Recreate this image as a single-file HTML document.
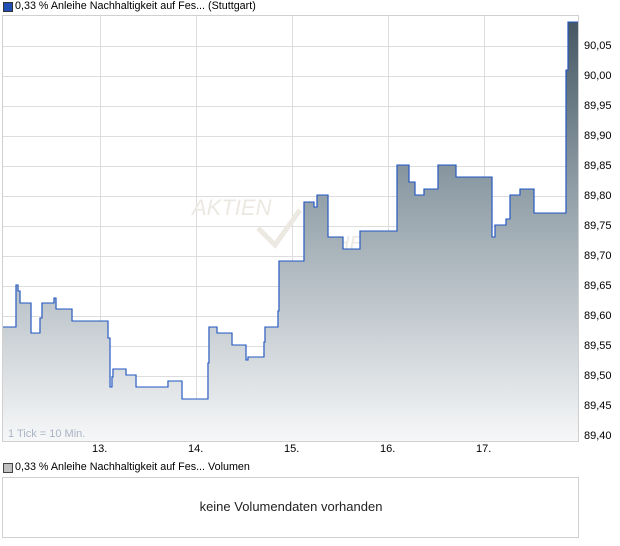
<!DOCTYPE html>
<html><head><meta charset="utf-8"><style>
body{margin:0;width:620px;height:546px;background:#fff;font-family:"Liberation Sans",sans-serif;position:relative;overflow:hidden}
.t{position:absolute;font-size:11px;color:#000;white-space:nowrap}
</style></head><body>
<div style="position:absolute;left:3px;top:2px;width:8px;height:8px;background:#1f4fb5;border:1px solid #333"></div>
<div class="t" style="left:15px;top:0px;font-size:10.75px">0,33 % Anleihe Nachhaltigkeit auf Fes... (Stuttgart)</div>
<svg style="position:absolute;left:0;top:0" width="620" height="546">
<defs><linearGradient id="g" x1="0" y1="22" x2="0" y2="441" gradientUnits="userSpaceOnUse">
<stop offset="0" stop-color="#465864"/><stop offset="0.4" stop-color="#909ea7"/><stop offset="1" stop-color="#f6f7f8"/></linearGradient></defs>
<g stroke="#dddddd" stroke-width="1">
<line x1="3" y1="46.5" x2="578" y2="46.5"/><line x1="3" y1="76.5" x2="578" y2="76.5"/><line x1="3" y1="106.5" x2="578" y2="106.5"/><line x1="3" y1="136.5" x2="578" y2="136.5"/><line x1="3" y1="166.5" x2="578" y2="166.5"/><line x1="3" y1="196.5" x2="578" y2="196.5"/><line x1="3" y1="226.5" x2="578" y2="226.5"/><line x1="3" y1="256.5" x2="578" y2="256.5"/><line x1="3" y1="286.5" x2="578" y2="286.5"/><line x1="3" y1="316.5" x2="578" y2="316.5"/><line x1="3" y1="346.5" x2="578" y2="346.5"/><line x1="3" y1="376.5" x2="578" y2="376.5"/><line x1="3" y1="406.5" x2="578" y2="406.5"/>
<line x1="100.5" y1="16" x2="100.5" y2="441"/><line x1="196.5" y1="16" x2="196.5" y2="441"/><line x1="292.5" y1="16" x2="292.5" y2="441"/><line x1="388.5" y1="16" x2="388.5" y2="441"/><line x1="484.5" y1="16" x2="484.5" y2="441"/>
</g>
<text x="192" y="215" font-family="Liberation Sans" font-size="22" font-style="italic" fill="#ece8e2">AKTIEN</text>
<text x="335" y="250" font-family="Liberation Sans" font-size="20" font-style="italic" fill="#ece8e2">HE</text>
<path d="M258 228 L275 245 L300 210" stroke="#ece8e2" stroke-width="5" fill="none"/>
<path id="p" d="M3 327 H16 V285 H18 V291 H20 V303 H31 V333 H40 V318 H42 V303 H54 V298 H56 V309 H72 V321 H108 V338 H110 V387 H112 V377 H113 V369 H126 V375 H136 V387 H168 V381 H182 V399 H208 V363 H209 V327 H217 V333 H232 V345 H246 V360 H248 V357 H264 V342 H265 V327 H278 V311 H279 V261 H304 V202 H314 V207 H317 V195 H328 V237 H343 V249 H360 V231 H397 V165 H409 V182 H415 V195 H424 V189 H438 V165 H456 V177 H492 V237 H495 V225 H506 V219 H510 V195 H520 V189 H534 V213 H566 V70 H568 V22 H578" fill="none" stroke="#1f55c0" stroke-width="1.1"/>
<path d="M3 327 H16 V285 H18 V291 H20 V303 H31 V333 H40 V318 H42 V303 H54 V298 H56 V309 H72 V321 H108 V338 H110 V387 H112 V377 H113 V369 H126 V375 H136 V387 H168 V381 H182 V399 H208 V363 H209 V327 H217 V333 H232 V345 H246 V360 H248 V357 H264 V342 H265 V327 H278 V311 H279 V261 H304 V202 H314 V207 H317 V195 H328 V237 H343 V249 H360 V231 H397 V165 H409 V182 H415 V195 H424 V189 H438 V165 H456 V177 H492 V237 H495 V225 H506 V219 H510 V195 H520 V189 H534 V213 H566 V70 H568 V22 H578 V441 H3 Z" fill="url(#g)"/>
<use href="#p"/>
<rect x="2.5" y="15.5" width="576" height="426" fill="none" stroke="#d0d0d0"/>
<rect x="2.5" y="477.5" width="576" height="60" fill="none" stroke="#d0d0d0"/>
</svg>
<div class="t" style="left:8px;top:428px;color:#aab4c4">1 Tick = 10 Min.</div>
<div class="t" style="left:92px;top:443px">13.</div>
<div class="t" style="left:188px;top:443px">14.</div>
<div class="t" style="left:284px;top:443px">15.</div>
<div class="t" style="left:380px;top:443px">16.</div>
<div class="t" style="left:476px;top:443px">17.</div>
<div class="t" style="left:584px;top:40px">90,05</div>
<div class="t" style="left:584px;top:70px">90,00</div>
<div class="t" style="left:584px;top:100px">89,95</div>
<div class="t" style="left:584px;top:130px">89,90</div>
<div class="t" style="left:584px;top:160px">89,85</div>
<div class="t" style="left:584px;top:190px">89,80</div>
<div class="t" style="left:584px;top:220px">89,75</div>
<div class="t" style="left:584px;top:250px">89,70</div>
<div class="t" style="left:584px;top:280px">89,65</div>
<div class="t" style="left:584px;top:310px">89,60</div>
<div class="t" style="left:584px;top:340px">89,55</div>
<div class="t" style="left:584px;top:370px">89,50</div>
<div class="t" style="left:584px;top:400px">89,45</div>
<div class="t" style="left:584px;top:430px">89,40</div>
<div style="position:absolute;left:3px;top:463px;width:8px;height:8px;background:#c0c0c0;border:1px solid #444"></div>
<div class="t" style="left:15px;top:461px;font-size:10.75px">0,33 % Anleihe Nachhaltigkeit auf Fes... Volumen</div>
<div class="t" style="left:0;width:582px;text-align:center;top:499px;font-size:13px;color:#222">keine Volumendaten vorhanden</div>
</body></html>
